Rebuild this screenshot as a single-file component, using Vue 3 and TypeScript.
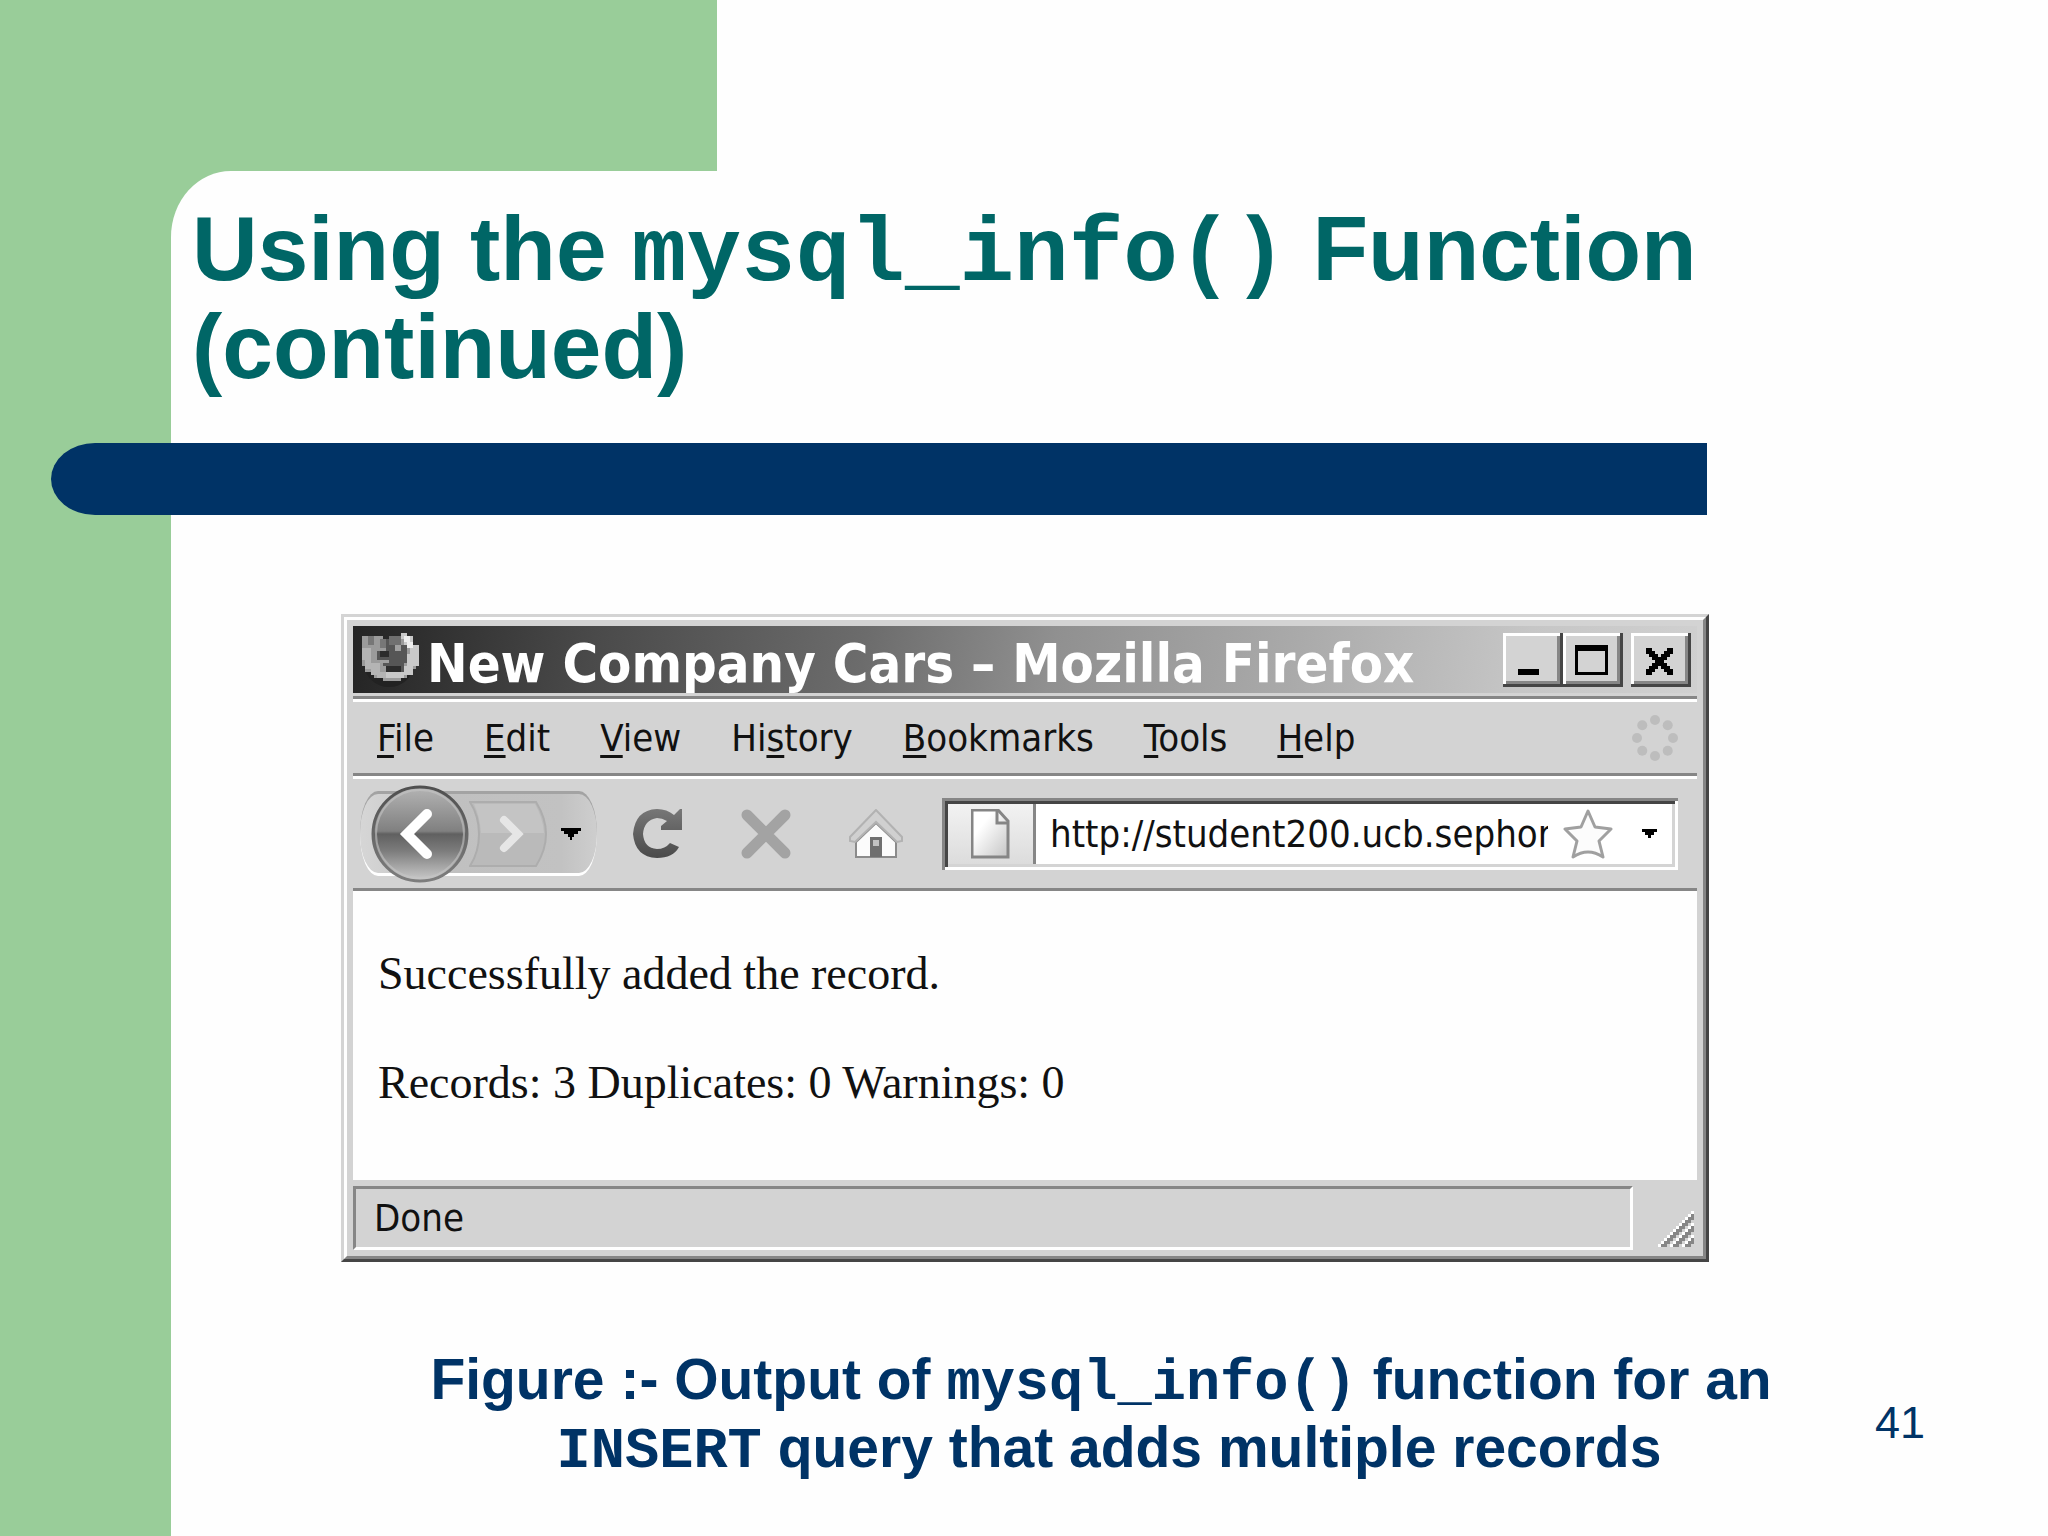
<script setup lang="ts">
import { ref } from 'vue'

interface MenuEntry {
  before: string
  key: string
  after: string
}

const menus: MenuEntry[] = [
  { before: '', key: 'F', after: 'ile' },
  { before: '', key: 'E', after: 'dit' },
  { before: '', key: 'V', after: 'iew' },
  { before: 'Hi', key: 's', after: 'tory' },
  { before: '', key: 'B', after: 'ookmarks' },
  { before: '', key: 'T', after: 'ools' },
  { before: '', key: 'H', after: 'elp' },
]

const url = ref('http://student200.ucb.sephor')

// Eight dots on a ring for the activity indicator
const dots = Array.from({ length: 8 }, (_, i) => ({
  x: 24 + 18 * Math.cos((i * Math.PI) / 4),
  y: 24 + 18 * Math.sin((i * Math.PI) / 4),
}))

// Diagonal ridges of the resize grip on a 12 x 12 grid
const grip: { x: number; y: number; fill: string }[] = []
for (let y = 0; y < 12; y++) {
  for (let x = 0; x < 12; x++) {
    const d = x + y - 11
    if (d < 0 || d % 4 === 3) continue
    grip.push({ x, y, fill: d % 4 === 0 ? '#ffffff' : '#868686' })
  }
}
</script>

<template>
  <main class="slide">
    <div class="top-gap"></div>
    <div class="panel">
      <h1 class="title">Using the <code>mysql_info()</code> Function<br />(continued)</h1>
      <div class="rule"></div>

      <section class="window" aria-label="New Company Cars">
        <div class="frame">
          <header class="titlebar">
            <svg class="logo" viewBox="0 0 20 18" width="60" height="54" aria-hidden="true">
              <ellipse cx="10" cy="11" rx="8" ry="7" fill="#222222" />
              <path d="M1 4V1h2v1h2V1h3v2h3V1h4v2h2v1h1v2h1v6h-1v2h-2v1h-2v1H8v-1H5v-1H4v-1H2v-2H1z" fill="#9b9b9b" />
              <path d="M1 5h3v5h3v3h5v2H6v-1H4v-2H2V9H1z" fill="#b4b4b4" />
              <path d="M14 0h2v1h2v3h2v7h-2v3h-3v1H9v-2h5v-2h2V7h1V4h-2V2h-1z" fill="#c9c9c9" />
              <path d="M15 1h2v2h1v2h-2V3h-1z" fill="#eeeeee" />
              <path d="M9 2h5v2h2v6h-1v3h-5v-2H8V9H6V6h3z" fill="#565656" />
              <path d="M10 1h4v3h-4z" fill="#707070" />
              <path d="M7 6h3v2H7zM9 11h5v2H9z" fill="#2c2c2c" />
              <path d="M7 9h3v1H7zM12 4h2v2h-2z" fill="#a0a0a0" />
              <path d="M3 1h2v3H3zM7 2h2v3H7z" fill="#777777" />
            </svg>
            <span class="caption-text">New Company Cars – Mozilla Firefox</span>
            <span class="controls">
              <button type="button" aria-label="Minimize">
                <svg viewBox="0 0 20 18" width="60" height="54" shape-rendering="crispEdges"><path d="M5 12h7v2H5z" /></svg>
              </button>
              <button type="button" aria-label="Maximize">
                <svg viewBox="0 0 20 18" width="60" height="54" shape-rendering="crispEdges"><path d="M4 4h11v10H4zM5 6v7h9V6z" fill-rule="evenodd" /></svg>
              </button>
              <button type="button" class="close" aria-label="Close">
                <svg viewBox="0 0 20 18" width="60" height="54" shape-rendering="crispEdges">
                  <path d="M5 5h2v1h1v1h1v1h1V7h1V6h1V5h2v2h-1v1h-1v1h-1v1h1v1h1v1h1v2h-2v-1h-1v-1h-1v-1H9v1H8v1H7v1H5v-2h1v-1h1v-1h1V9H7V8H6V7H5z" />
                </svg>
              </button>
            </span>
          </header>

          <nav class="menubar">
            <button v-for="m in menus" :key="m.key + m.after" type="button">{{ m.before }}<u>{{ m.key }}</u>{{ m.after }}</button>
            <svg class="throbber" viewBox="0 0 48 48" width="48" height="48" aria-hidden="true">
              <circle v-for="(d, i) in dots" :key="i" :cx="d.x" :cy="d.y" r="5" fill="#bdbdbd" />
            </svg>
          </nav>

          <div class="toolbar">
            <div class="history">
              <button type="button" class="back" aria-label="Back">
                <svg viewBox="0 0 98 98" width="98" height="98">
                  <defs>
                    <linearGradient id="orb" x1="0" y1="0" x2="0" y2="1">
                      <stop offset="0" stop-color="#b4b4b4" />
                      <stop offset=".47" stop-color="#808080" />
                      <stop offset=".5" stop-color="#606060" />
                      <stop offset=".68" stop-color="#7c7c7c" />
                      <stop offset="1" stop-color="#cccccc" />
                    </linearGradient>
                    <linearGradient id="rim" x1="0" y1="0" x2="0" y2="1">
                      <stop offset="0" stop-color="#505050" />
                      <stop offset="1" stop-color="#7e7e7e" />
                    </linearGradient>
                  </defs>
                  <circle cx="49" cy="49" r="47" fill="url(#orb)" stroke="url(#rim)" stroke-width="3" />
                  <circle cx="49" cy="49" r="44" fill="none" stroke="#c4c4c4" stroke-width="2" opacity=".6" />
                  <path d="M56 29L36 49l20 20" fill="none" stroke="#ffffff" stroke-width="10" stroke-linecap="round" />
                </svg>
              </button>
              <button type="button" class="forward" aria-label="Forward">
                <svg viewBox="0 0 78 66" width="78" height="66">
                  <path d="M1 1h66q10 16 10 32T67 65H1q9-14 9-32T1 1z" fill="#bababa" stroke="#adadad" stroke-width="2" />
                  <path d="M5 3h61q8 14 9 29H12Q11 16 5 3z" fill="#c4c4c4" />
                  <path d="M35 19l14 14-14 14" fill="none" stroke="#e6e6e6" stroke-width="8" stroke-linecap="round" />
                </svg>
              </button>
              <button type="button" class="recent" aria-label="Recent pages">
                <svg viewBox="0 0 20 12" width="20" height="12"><path d="M0 0h20v3h-3v3h-4v3h-2v3H9V9H7V6H3V3H0z" /></svg>
              </button>
            </div>

            <button type="button" class="reload" aria-label="Reload">
              <svg viewBox="0 0 50 50" width="50" height="50">
                <defs>
                  <linearGradient id="turn" x1="0" y1="0" x2="0" y2="1">
                    <stop offset="0" stop-color="#777777" />
                    <stop offset="1" stop-color="#4a4a4a" />
                  </linearGradient>
                </defs>
                <path d="M49 0v21H28v-4l6-5Q29 9 24 9 11 11 10 25q1 14 14 15 8 0 13-6l9 4q-6 11-22 11Q2 48 0 25 2 1 24 0q10 0 17 6l6-6z" fill="url(#turn)" />
              </svg>
            </button>
            <button type="button" class="stop" aria-label="Stop">
              <svg viewBox="0 0 50 50" width="50" height="50">
                <path d="M6 6l38 38M44 6L6 44" stroke="#a3a3a3" stroke-width="11" stroke-linecap="round" />
              </svg>
            </button>
            <button type="button" class="home" aria-label="Home">
              <svg viewBox="0 0 54 50" width="54" height="50">
                <path d="M27 14L7 33v15h40V33z" fill="#fbfbfb" stroke="#8b8b8b" stroke-width="2" />
                <path d="M27 1L1 28v4l5 1 21-20 21 20 5-1v-4z" fill="#d0d0d0" stroke="#b2b2b2" stroke-width="2" />
                <path d="M21 28h12v20H21z" fill="#6f6f6f" />
                <path d="M24 31h6v6h-6z" fill="#c2c2c2" />
              </svg>
            </button>

            <div class="address">
              <button type="button" class="identity" aria-label="Site identity">
                <svg viewBox="0 0 39 50" width="39" height="50">
                  <defs>
                    <linearGradient id="sheet" x1="0" y1="0" x2="1" y2="1">
                      <stop offset=".3" stop-color="#ffffff" />
                      <stop offset="1" stop-color="#c4c4c4" />
                    </linearGradient>
                  </defs>
                  <path d="M1 1h26l10 11v36H1z" fill="url(#sheet)" stroke="#858585" stroke-width="3" />
                  <path d="M26 1v13h12" fill="none" stroke="#858585" stroke-width="3" />
                </svg>
              </button>
              <input v-model="url" type="text" aria-label="Address" spellcheck="false" />
              <button type="button" class="star" aria-label="Bookmark this page">
                <svg viewBox="0 0 50 50" width="50" height="50">
                  <path d="M25 2l7 16 16 2-12 12 4 16q-15-10-30 0l4-16L2 20l16-2z" fill="#fcfcfc" stroke="#a0a0a0" stroke-width="3" stroke-linejoin="round" />
                </svg>
              </button>
              <button type="button" class="drop" aria-label="Show history">
                <svg viewBox="0 0 15 9" width="15" height="9"><path d="M0 0h15v3h-3v3H9v3H6V6H3V3H0z" /></svg>
              </button>
            </div>
          </div>

          <article class="page">
            <p>Successfully added the record.</p>
            <p>Records: 3 Duplicates: 0 Warnings: 0</p>
          </article>

          <footer class="status">
            <span class="message">Done</span>
            <svg class="grip" viewBox="0 0 12 12" width="36" height="36" shape-rendering="crispEdges" aria-hidden="true">
              <rect v-for="(g, i) in grip" :key="i" :x="g.x" :y="g.y" width="1" height="1" :fill="g.fill" />
            </svg>
          </footer>
        </div>
      </section>

      <div class="bottom">
        <p class="figure">Figure :- Output of <code>mysql_info()</code> function for an&nbsp;<br /><code>INSERT</code> query that adds multiple records</p>
        <span class="number">41</span>
      </div>
    </div>
  </main>
</template>

<style>
body {
  margin: 0;
  background: #fefefe;
}
</style>

<style scoped>
.slide {
  display: flex;
  flex-direction: column;
  min-height: 100vh;
  box-sizing: border-box;
  padding-left: 171px;
  background: #99cd99;
  font-family: "Liberation Sans", Arial, sans-serif;
}
.top-gap {
  height: 171px;
  margin-left: 546px;
  background: #fefefe;
}
.panel {
  flex: 1;
  background: #fefefe;
  border-top-left-radius: 60px 66px;
}
.title {
  margin: 0;
  padding: 29px 0 47px 21px;
  color: #006666;
  font-size: 91px;
  line-height: 98px;
  font-weight: 700;
}
code {
  font-family: "Liberation Mono", "Courier New", monospace;
  line-height: 0;
}
.rule {
  height: 72px;
  margin: 0 341px 0 -120px;
  background: #003366;
  border-radius: 44px 0 0 44px / 36px 0 0 36px;
}

.window {
  margin: 99px 339px 0 170px;
  border: 3px solid;
  border-color: #d4d4d4 #454545 #454545 #d4d4d4;
  font-family: "DejaVu Sans Condensed", "DejaVu Sans", sans-serif;
  color: #111111;
}
.frame {
  padding: 6px;
  border: 3px solid;
  border-color: #ffffff #868686 #868686 #ffffff;
  background: #d3d3d3;
}
button {
  display: block;
  flex: none;
  margin: 0;
  padding: 0;
  border: 0;
  background: none;
  color: inherit;
  font: inherit;
}
svg {
  display: block;
}

.titlebar {
  display: flex;
  align-items: center;
  height: 67px;
  padding: 0 6px;
  background: linear-gradient(100deg, #242424, #4a4a4a 18%, #6c6c6c 38%, #909090 52%, #aaaaaa 70%, #c6c6c6 87%, #d0d0d0);
}
.logo {
  flex: none;
}
.caption-text {
  flex: 1;
  padding: 8px 0 0 8px;
  color: #ffffff;
  font-size: 54px;
  line-height: 58px;
  font-weight: 700;
  white-space: nowrap;
}
.controls {
  display: flex;
}
.controls button {
  background: #d3d3d3;
  box-shadow: inset -3px -3px #454545, inset 3px 3px #ffffff, inset -6px -6px #868686;
}
.controls .close {
  margin-left: 8px;
}

.menubar {
  display: flex;
  align-items: center;
  gap: 50px;
  height: 71px;
  margin-top: 3px;
  padding: 3px 18px 0 24px;
  border-top: 3px solid #868686;
  box-shadow: inset 0 3px #ffffff;
  font-size: 38px;
  line-height: 44px;
}
.menubar u {
  text-decoration-thickness: 3px;
  text-underline-offset: 4px;
  text-decoration-skip-ink: none;
}
.throbber {
  margin-left: auto;
}

.toolbar {
  display: flex;
  align-items: center;
  height: 109px;
  padding: 3px 19px 0 7px;
  border-top: 3px solid #868686;
  border-bottom: 3px solid #868686;
  box-shadow: inset 0 3px #ffffff;
}
.history {
  display: flex;
  flex: none;
  align-items: center;
  box-sizing: border-box;
  width: 237px;
  height: 85px;
  padding-left: 11px;
  border-top: 3px solid #a3a3a3;
  border-bottom: 3px solid #ffffff;
  border-radius: 18px / 42px;
  background: linear-gradient(90deg, #d6d6d6, #c0c0c0 40%, #c2c2c2 85%, #cecece);
}
.recent {
  margin-left: 14px;
}
.reload {
  margin-left: 36px;
}
.stop {
  margin-left: 58px;
}
.home {
  margin-left: 58px;
}
.address {
  display: flex;
  flex: 1;
  align-items: center;
  box-sizing: border-box;
  height: 72px;
  min-width: 0;
  margin-left: 39px;
  padding: 6px;
  background: #ffffff;
  box-shadow: inset 3px 3px #868686, inset -3px -3px #ffffff, inset 6px 6px #454545, inset -6px -6px #d4d4d4;
}
.identity {
  display: flex;
  align-items: center;
  justify-content: center;
  width: 88px;
  height: 60px;
  border-right: 3px solid #868686;
  background: linear-gradient(#f2f2f2, #dcdcdc);
}
.address input {
  flex: 1;
  min-width: 0;
  height: 60px;
  margin: 0 0 0 14px;
  padding: 0;
  border: 0;
  outline: 0;
  background: transparent;
  color: #111111;
  font: 38px/44px "DejaVu Sans Condensed", "DejaVu Sans", sans-serif;
}
.star {
  margin-left: 15px;
}
.drop {
  margin: 0 15px 0 29px;
}

.page {
  padding: 56px 25px 70px;
  background: #fefefe;
  font-family: "Liberation Serif", "Times New Roman", serif;
  font-size: 46px;
  line-height: 54px;
}
.page p {
  margin: 0;
}
.page p + p {
  margin-top: 55px;
}

.status {
  display: flex;
  align-items: flex-end;
  justify-content: space-between;
  margin-top: 6px;
}
.message {
  flex: 1;
  margin-right: 25px;
  padding: 7px 18px;
  border: 3px solid;
  border-color: #868686 #ffffff #ffffff #868686;
  font-size: 38px;
  line-height: 44px;
}
.grip {
  flex: none;
  margin: 0 3px 3px 0;
}

.bottom {
  display: flex;
  align-items: center;
  margin-top: 83px;
  padding: 0 123px 55px 172px;
  color: #003366;
}
.figure {
  flex: 1;
  margin: 0;
  font-size: 57px;
  line-height: 68px;
  font-weight: 700;
  text-align: center;
}
.number {
  padding-top: 20px;
  font-size: 45px;
  line-height: 52px;
}
</style>
